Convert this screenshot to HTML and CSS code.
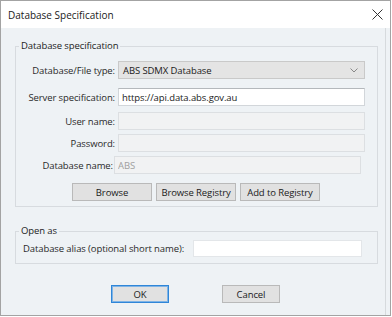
FILE: index.html
```html
<!DOCTYPE html>
<html lang="en">
<head>
  <meta charset="UTF-8" />
  <meta name="viewport" content="width=device-width, initial-scale=1.0" />
  <title>Database Specification</title>
  <link rel="stylesheet" href="styles.css">
</head>
<body>
  <div class="dialog">
    <div class="titlebar">
      <span class="title">Database Specification</span>
      <button class="close" aria-label="Close">
        <svg width="11" height="11" viewBox="0 0 11 11">
          <path d="M0.5 0.5 L10.5 10.5 M10.5 0.5 L0.5 10.5" stroke="#333" stroke-width="1" fill="none" />
        </svg>
      </button>
    </div>

    <div class="content">
      <fieldset class="group">
        <legend>Database specification</legend>

        <div class="row row-type">
          <label class="row-label">Database/File type:</label>
          <div class="combo">
            <span>ABS SDMX Database</span>
            <svg width="8" height="5" viewBox="0 0 8 5">
              <path d="M0.5 0.5 L4 4 L7.5 0.5" stroke="#888" stroke-width="1" fill="none" />
            </svg>
          </div>
        </div>

        <div class="row row-server">
          <label class="row-label">Server specification:</label>
          <input class="field" type="text" value="https://api.data.abs.gov.au">
        </div>

        <div class="row row-user">
          <label class="row-label">User name:</label>
          <input class="field" type="text" disabled>
        </div>

        <div class="row row-pass">
          <label class="row-label">Password:</label>
          <input class="field" type="password" disabled>
        </div>

        <div class="row row-db">
          <label class="row-label">Database name:</label>
          <input class="field" type="text" value="ABS" disabled>
        </div>

        <div class="actions">
          <button class="btn btn-wide">Browse</button>
          <button class="btn btn-wide">Browse Registry</button>
          <button class="btn btn-wide">Add to Registry</button>
        </div>
      </fieldset>

      <fieldset class="group group-open">
        <legend>Open as</legend>
        <div class="alias-row">
          <label class="alias-label">Database alias (optional short name):</label>
          <input class="field alias-field" type="text">
        </div>
      </fieldset>

      <div class="footer">
        <button class="btn btn-default">OK</button>
        <button class="btn">Cancel</button>
      </div>
    </div>
  </div>
</body>
</html>
```

FILE: styles.css
```css
body {
  margin: 0;
  background-color: #ffffff;
  font-family: "Open Sans", "Noto Sans", sans-serif;
  font-size: 9.5px;
  letter-spacing: -0.1px;
  color: #2a2a2a;
}

.dialog {
  width: 391px;
  height: 316px;
  box-sizing: border-box;
  border: 1px solid #a3a3a3;
  background-color: #eef2f5;
  display: flex;
  flex-direction: column;
}

.titlebar {
  height: 27px;
  flex-shrink: 0;
  background-color: #ffffff;
  display: flex;
  align-items: center;
  justify-content: space-between;
  padding-left: 7px;
}

.title {
  font-size: 10px;
  letter-spacing: 0;
  color: #1a1a1a;
}

.close {
  width: 26px;
  height: 27px;
  padding: 0;
  border: none;
  background: none;
  display: flex;
  align-items: center;
  justify-content: center;
}

.content {
  flex: 1;
  padding: 11px 7px 0 14px;
  border-right: 1px solid #d6dadd;
  margin-right: 4px;
}

.group {
  margin: 0;
  padding: 0 0 5px 0;
  border: 1px solid #d7dbdf;
  min-width: 0;
}

.group legend {
  margin-left: 3px;
  padding: 0 2px;
  line-height: 14px;
  color: #222;
}

.row {
  display: flex;
  align-items: center;
  gap: 3px;
}

.row-label {
  width: 99px;
  flex-shrink: 0;
  text-align: right;
  white-space: nowrap;
}

.row-type { margin-top: 8px; }
.row-server { margin-top: 9px; }
.row-user { margin-top: 6px; }
.row-pass { margin-top: 4px; }

.row-db {
  margin-top: 4px;
  gap: 1px;
}

.row-db .row-label {
  width: 97px;
}

.field {
  width: 247px;
  height: 18px;
  box-sizing: border-box;
  margin: 0;
  padding: 0 3px;
  font-family: inherit;
  font-size: 9.5px;
  letter-spacing: -0.1px;
  color: #1a1a1a;
  background-color: #ffffff;
  border: 1px solid #d2d6da;
  border-top-color: #b4b8bc;
  outline: none;
}

.field:disabled {
  background-color: #f1f2f3;
  border-color: #dcdfe2;
  color: #a0a0a0;
}

.combo {
  width: 247px;
  height: 18px;
  box-sizing: border-box;
  padding: 0 6px 0 4px;
  display: flex;
  align-items: center;
  justify-content: space-between;
  background-color: #e4e4e4;
  border: 1px solid #c9c9c9;
  color: #1a1a1a;
}

.actions {
  display: flex;
  gap: 4px;
  margin: 9px 0 0 56px;
}

.btn {
  height: 18px;
  width: 58px;
  box-sizing: border-box;
  padding: 0;
  font-family: inherit;
  font-size: 9.5px;
  letter-spacing: -0.1px;
  color: #1a1a1a;
  background-color: #e1e1e1;
  border: 1px solid #b9b9b9;
}

.btn-wide {
  width: 80px;
}

.btn-default {
  border-color: #2f86d8;
  box-shadow: inset 0 0 0 1px #7fb4e6;
}

.group-open {
  margin-top: 17px;
  padding-bottom: 6px;
}

.alias-row {
  display: flex;
  align-items: center;
  margin-top: 2px;
  padding-left: 7px;
}

.alias-label {
  width: 170px;
  flex-shrink: 0;
  white-space: nowrap;
}

.alias-field {
  width: 169px;
  height: 17px;
  border-color: #e3e6e9;
}

.footer {
  display: flex;
  gap: 53px;
  margin-top: 21px;
  padding-left: 96px;
}
```
